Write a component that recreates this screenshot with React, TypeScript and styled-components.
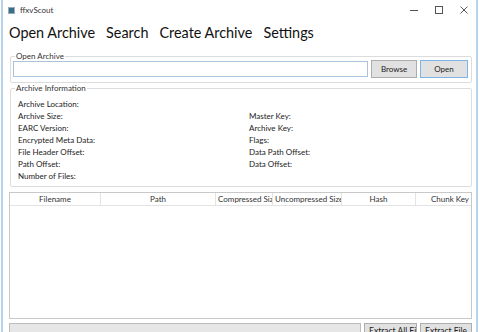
import styled, { createGlobalStyle } from 'styled-components';

const Global = createGlobalStyle`
  html, body { margin: 0; padding: 0; background: #fff; }
  body { font-family: Lato, "Noto Sans", "Noto Sans CJK SC", sans-serif; color: #222; }
  * { box-sizing: border-box; }
`;

const Window = styled.div`
  width: 480px;
  height: 332px;
  overflow: hidden;
  background: #fff;
  display: flex;
  flex-direction: column;
  position: relative;
  &::before, &::after {
    content: '';
    position: absolute;
    top: 0;
    bottom: 0;
    width: 2px;
    background: #b9d3ea;
  }
  &::before { left: 1px; }
  &::after { right: 2px; }
`;

const TitleBar = styled.div`
  height: 20px;
  flex-shrink: 0;
  display: flex;
  align-items: center;
  padding-left: 8px;
  font-size: 8px;
  color: #333;
`;

const AppIcon = styled.div`
  width: 7px;
  height: 7px;
  background: #3a6f8a;
  border: 1px solid #9ab;
  margin-right: 5px;
`;

const Controls = styled.div`
  margin-left: auto;
  display: flex;
  align-items: center;
  gap: 17px;
  padding-right: 12px;
  color: #444;
`;

const Menu = styled.div`
  height: 24px;
  flex-shrink: 0;
  display: flex;
  align-items: center;
  gap: 11px;
  padding-left: 9px;
  font-size: 14.4px;
  color: #111;
`;

const Content = styled.div`
  flex: 1;
  padding: 7px 8px 0 9px;
  display: flex;
  flex-direction: column;
`;

const Group = styled.fieldset<{ $pb: number }>`
  margin: 0 0 0 1px;
  padding: 0 3px ${(p) => p.$pb}px 2px;
  border: 1px solid #dcdcdc;
  border-radius: 2px;
  min-width: 0;
  legend {
    font-size: 8px;
    color: #333;
    padding: 0 1px;
    margin-left: 2px;
    line-height: 10px;
  }
`;

const InputRow = styled.div`
  display: flex;
  align-items: center;
  gap: 3px;
  margin-top: -1px;
`;

const TextBox = styled.div`
  flex: 1;
  height: 16px;
  border: 1px solid #a9c3dc;
  background: #fff;
`;

const Button = styled.div<{ $w: number; $focus?: boolean }>`
  width: ${(p) => p.$w}px;
  height: 18px;
  font-size: 8px;
  display: flex;
  align-items: center;
  justify-content: center;
  background: #e1e1e1;
  border: 1px solid ${(p) => (p.$focus ? '#7eb4ea' : '#adadad')};
  color: #222;
  flex-shrink: 0;
  white-space: nowrap;
  overflow: hidden;
`;

const InfoGrid = styled.div`
  display: grid;
  grid-template-columns: 231px 1fr;
  padding: 5px 0 0 5px;
  font-size: 8px;
  color: #222;
  line-height: 12px;
`;

const Col = styled.div<{ $offset?: number }>`
  display: flex;
  flex-direction: column;
  padding-top: ${(p) => p.$offset || 0}px;
`;

const Table = styled.div`
  margin-top: 5px;
  height: 127px;
  flex-shrink: 0;
  border: 1px solid #c8c8c8;
  display: flex;
  flex-direction: column;
`;

const Header = styled.div`
  display: flex;
  height: 13px;
  border-bottom: 1px solid #e3e3e3;
  font-size: 8px;
  color: #333;
`;

const HeadCell = styled.div<{ $w: number; $align?: string }>`
  width: ${(p) => p.$w}px;
  flex-shrink: 0;
  display: flex;
  align-items: center;
  justify-content: ${(p) => p.$align || 'center'};
  padding: 0 2px;
  border-right: 1px solid #e3e3e3;
  white-space: nowrap;
  overflow: hidden;
  &:last-child { border-right: none; flex: 1; }
`;

const Footer = styled.div`
  margin-top: 4px;
  display: flex;
  align-items: flex-start;
  gap: 3px;
`;

const Progress = styled.div`
  flex: 1;
  height: 14px;
  background: #e6e6e6;
  border: 1px solid #bcbcbc;
`;

const BottomButton = styled(Button)`
  height: 14px;
  align-items: flex-start;
  justify-content: flex-start;
  padding: 2px 0 0 4px;
  font-size: 8.5px;
`;

const leftLabels = [
  'Archive Location:',
  'Archive Size:',
  'EARC Version:',
  'Encrypted Meta Data:',
  'File Header Offset:',
  'Path Offset:',
  'Number of Files:',
];

const rightLabels = ['Master Key:', 'Archive Key:', 'Flags:', 'Data Path Offset:', 'Data Offset:'];

const columns: { name: string; w: number; align?: string }[] = [
  { name: 'Filename', w: 91 },
  { name: 'Path', w: 115 },
  { name: 'Compressed Siz', w: 57, align: 'flex-start' },
  { name: 'Uncompressed Size', w: 69, align: 'flex-start' },
  { name: 'Hash', w: 74 },
  { name: 'Chunk Key', w: 0, align: 'flex-end' },
];

export default function App() {
  return (
    <Window>
      <Global />
      <TitleBar>
        <AppIcon />
        ffxvScout
        <Controls>
          <svg width="8" height="9" viewBox="0 0 8 9">
            <path d="M0 4.5h8" stroke="#555" strokeWidth="1" />
          </svg>
          <svg width="8" height="9" viewBox="0 0 8 9">
            <rect x="0.5" y="0.5" width="7" height="7" fill="none" stroke="#555" />
          </svg>
          <svg width="8" height="9" viewBox="0 0 8 9">
            <path d="M0.5 0.5l7 7M7.5 0.5l-7 7" stroke="#555" />
          </svg>
        </Controls>
      </TitleBar>
      <Menu>
        <span>Open Archive</span>
        <span>Search</span>
        <span>Create Archive</span>
        <span>Settings</span>
      </Menu>
      <Content>
        <Group $pb={4}>
          <legend>Open Archive</legend>
          <InputRow>
            <TextBox />
            <Button $w={46}>Browse</Button>
            <Button $w={48} $focus>
              Open
            </Button>
          </InputRow>
        </Group>
        <Group $pb={4}>
          <legend>Archive Information</legend>
          <InfoGrid>
            <Col>
              {leftLabels.map((l) => (
                <span key={l}>{l}</span>
              ))}
            </Col>
            <Col $offset={12}>
              {rightLabels.map((l) => (
                <span key={l}>{l}</span>
              ))}
            </Col>
          </InfoGrid>
        </Group>
        <Table>
          <Header>
            {columns.map((c) => (
              <HeadCell key={c.name} $w={c.w} $align={c.align}>
                {c.name}
              </HeadCell>
            ))}
          </Header>
        </Table>
        <Footer>
          <Progress />
          <BottomButton $w={53}>Extract All Files</BottomButton>
          <BottomButton $w={52}>Extract File</BottomButton>
        </Footer>
      </Content>
    </Window>
  );
}
